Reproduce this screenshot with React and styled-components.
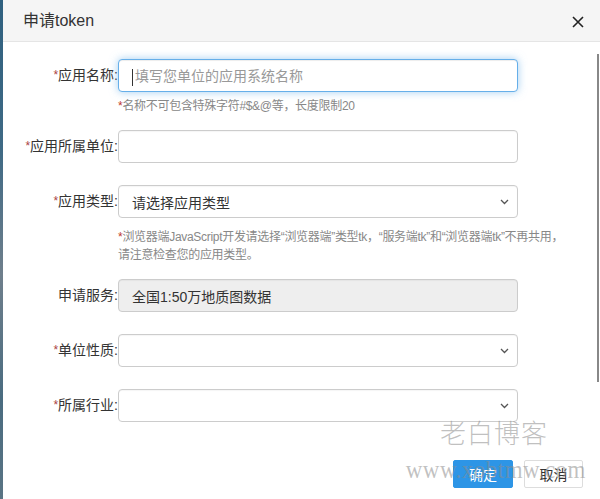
import React from "react";
import styled, { createGlobalStyle } from "styled-components";

const Global = createGlobalStyle`
  html, body { margin: 0; padding: 0; background: #fff; }
  body { font-family: "Liberation Sans", "Noto Sans CJK SC", sans-serif; }
  * { box-sizing: border-box; }
`;

const Page = styled.div`
  display: flex;
  width: 600px;
  height: 499px;
  overflow: hidden;
`;

const Strip = styled.div`
  width: 3px;
  flex: none;
  background: linear-gradient(#2f607f 0%, #3f6a85 30%, #6f7f8c 55%, #4a6c80 80%, #5a7484 100%);
`;

const Modal = styled.div`
  position: relative;
  flex: 1;
  display: flex;
  flex-direction: column;
  background: #fff;
`;

const Header = styled.div`
  height: 42px;
  flex: none;
  background: #f5f5f5;
  border-bottom: 1px solid #e5e5e5;
  display: flex;
  align-items: center;
  justify-content: space-between;
  padding: 0 16px 0 20px;
`;

const Title = styled.div`
  font-size: 16px;
  color: #333;
  line-height: 20px;
`;

const Close = styled.div`
  width: 12px;
  height: 12px;
  display: flex;
  margin-top: 2px;
`;

const Body = styled.div`
  padding-top: 17px;
  display: flex;
  flex-direction: column;
`;

const Row = styled.div`
  display: grid;
  grid-template-columns: 115px 400px;
  margin-bottom: ${(p) => p.$mb}px;
`;

const Label = styled.div`
  text-align: right;
  line-height: 33px;
  font-size: 14px;
  color: #333;
  white-space: nowrap;
`;

const Req = styled.span`
  color: #a94442;
  font-size: 12px;
  vertical-align: 1px;
`;

const Field = styled.div`
  height: 33px;
  border: 1px solid ${(p) => (p.$focus ? "#66afe9" : "#ccc")};
  border-radius: 4px;
  background: ${(p) => (p.$disabled ? "#eee" : "#fff")};
  box-shadow: ${(p) =>
    p.$focus
      ? "inset 0 1px 1px rgba(0,0,0,.075), 0 0 8px rgba(102,175,233,.6)"
      : "inset 0 1px 1px rgba(0,0,0,.04)"};
  display: flex;
  align-items: center;
  justify-content: space-between;
  padding: 0 8px 0 13px;
  font-size: 14px;
  color: ${(p) => (p.$placeholder ? "#999" : "#333")};
`;

const Caret = styled.span`
  display: inline-block;
  width: 1px;
  height: 17px;
  background: #333;
  margin-right: 2px;
  vertical-align: middle;
`;

const Hint = styled.div`
  grid-column: 2;
  font-size: 12px;
  line-height: 18px;
  color: #888;
  white-space: nowrap;
  letter-spacing: -0.3px;
  margin-top: ${(p) => p.$mt}px;
`;

const HintStar = styled.span`
  color: #c0392b;
`;

const Footer = styled.div`
  margin-top: 38px;
  display: flex;
  justify-content: flex-end;
  gap: 11px;
  padding-right: 17px;
`;

const Button = styled.div`
  width: ${(p) => p.$w}px;
  height: 28px;
  border-radius: 2px;
  display: flex;
  align-items: center;
  justify-content: center;
  font-size: 14px;
  background: ${(p) => (p.$primary ? "#2d95e6" : "#fff")};
  color: ${(p) => (p.$primary ? "#fff" : "#333")};
  border: 1px solid ${(p) => (p.$primary ? "#2d95e6" : "#ddd")};
`;

const Thumb = styled.div`
  position: absolute;
  right: 1px;
  top: 54px;
  width: 2px;
  height: 328px;
  background: #888;
`;

const Watermark = styled.div`
  position: absolute;
  right: 14px;
  top: 414px;
  display: flex;
  flex-direction: column;
  align-items: flex-end;
  pointer-events: none;
  z-index: 2;
`;

const WmTitle = styled.div`
  font-family: "Noto Sans CJK SC", sans-serif;
  font-weight: 300;
  font-size: 26px;
  letter-spacing: 1px;
  line-height: 36px;
  color: rgba(150, 150, 150, 0.6);
  margin-right: 38px;
`;

const WmUrl = styled.div`
  font-family: "Liberation Serif", serif;
  font-size: 23px;
  line-height: 28px;
  margin-top: 6px;
  letter-spacing: 0.5px;
  color: rgba(140, 140, 140, 0.55);
  transform: scaleY(1.1);
`;

const Chevron = () => (
  <svg width="9" height="6" viewBox="0 0 9 6">
    <path d="M1 1 L4.5 4.5 L8 1" fill="none" stroke="#555" strokeWidth="1.3" />
  </svg>
);

export default function App() {
  return (
    <>
      <Global />
      <Page>
        <Strip />
        <Modal>
          <Header>
            <Title>申请token</Title>
            <Close>
              <svg width="12" height="12" viewBox="0 0 12 12">
                <path d="M1 1 L11 11 M11 1 L1 11" stroke="#222" strokeWidth="1.6" />
              </svg>
            </Close>
          </Header>
          <Body>
            <Row $mb={15}>
              <Label>
                <Req>*</Req>应用名称:
              </Label>
              <Field $focus $placeholder>
                <span>
                  <Caret />
                  填写您单位的应用系统名称
                </span>
              </Field>
              <Hint $mt={5}>
                <HintStar>*</HintStar>名称不可包含特殊字符#$&amp;@等，长度限制20
              </Hint>
            </Row>
            <Row $mb={22}>
              <Label>
                <Req>*</Req>应用所属单位:
              </Label>
              <Field />
            </Row>
            <Row $mb={15}>
              <Label>
                <Req>*</Req>应用类型:
              </Label>
              <Field>
                <span>请选择应用类型</span>
                <Chevron />
              </Field>
              <Hint $mt={10}>
                <HintStar>*</HintStar>浏览器端JavaScript开发请选择“浏览器端”类型tk，“服务端tk”和“浏览器端tk”不再共用，
                <br />
                请注意检查您的应用类型。
              </Hint>
            </Row>
            <Row $mb={22}>
              <Label>申请服务:</Label>
              <Field $disabled>
                <span>全国1:50万地质图数据</span>
              </Field>
            </Row>
            <Row $mb={22}>
              <Label>
                <Req>*</Req>单位性质:
              </Label>
              <Field>
                <span />
                <Chevron />
              </Field>
            </Row>
            <Row $mb={0}>
              <Label>
                <Req>*</Req>所属行业:
              </Label>
              <Field>
                <span />
                <Chevron />
              </Field>
            </Row>
            <Footer>
              <Button $primary $w={60}>确定</Button>
              <Button $w={59}>取消</Button>
            </Footer>
          </Body>
          <Thumb />
          <Watermark>
            <WmTitle>老白博客</WmTitle>
            <WmUrl>www.xobtmw.com</WmUrl>
          </Watermark>
        </Modal>
      </Page>
    </>
  );
}
